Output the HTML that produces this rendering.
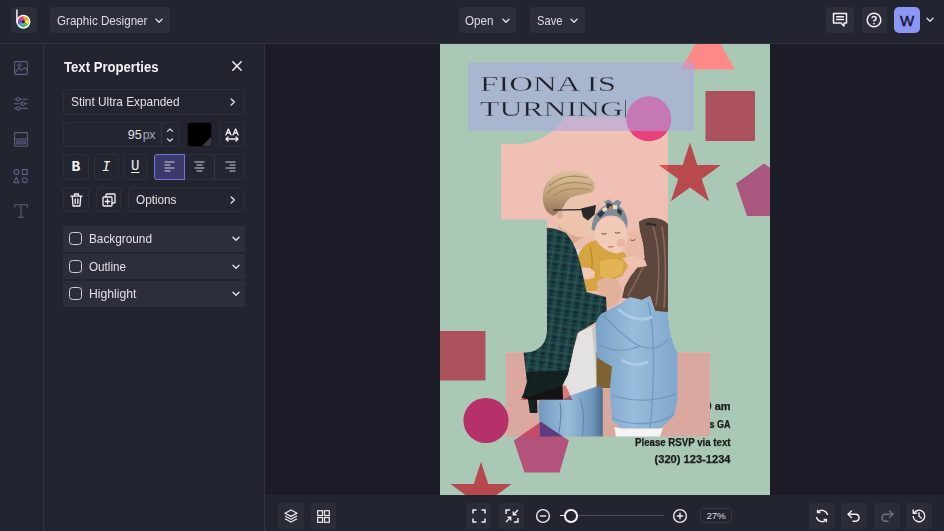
<!DOCTYPE html>
<html><head><meta charset="utf-8"><title>Graphic Designer</title>
<style>
*{box-sizing:border-box;margin:0;padding:0}
html,body{width:944px;height:531px;overflow:hidden;background:#1b1c27;font-family:"Liberation Sans",sans-serif;color:#e4e5ea}
.abs{position:absolute}
#top{position:absolute;left:0;top:0;width:944px;height:44px;background:#22242f;border-bottom:1px solid #30323f}
#left{position:absolute;left:0;top:44px;width:44px;height:487px;background:#22242f;border-right:1px solid #30323f}
#panel{position:absolute;left:44px;top:44px;width:221px;height:487px;background:#22242f;border-right:1px solid #30323f}
#stage{position:absolute;left:265px;top:44px;width:679px;height:451px;background:#1b1c27;overflow:hidden}
#bottom{position:absolute;left:265px;top:495px;width:679px;height:36px;background:#22242f}
.tb{position:absolute;top:7px;height:26px;background:#2c2e3b;border-radius:3px;font-size:13px;line-height:27px;color:#dcdde4;white-space:nowrap}
.btn{position:absolute;border:1px solid #2d2f3b;border-radius:3px;background:#232530}
.row{position:absolute;left:19px;width:182px;height:26px;background:#2c2e3b;font-size:13px;line-height:26px;color:#e0e1e7}
.row .cb{position:absolute;left:6px;top:6px;width:13px;height:13px;border:1.5px solid #cfd0d8;border-radius:3.5px}
.row span{position:absolute;left:26px;top:0}
.row svg{position:absolute;left:169px;top:10px}
.bb{position:absolute;top:8px;width:26px;height:26px;background:#2a2c38;border-radius:3px}
svg{display:block;overflow:visible}
.sx{display:inline-block;transform:scaleX(.9);transform-origin:0 50%;white-space:nowrap}
</style></head><body>

<div id="top">
  <div class="tb" style="left:11px;width:26px">
    <svg width="26" height="26" viewBox="0 0 26 26">
      <circle cx="12.4" cy="14.7" r="5.6" fill="#e8483f"/>
      <path d="M12.4 14.7 L12.4 9.1 A5.6 5.6 0 0 1 17.25 11.9Z" fill="#f6a21c"/>
      <path d="M12.4 14.7 L17.25 11.9 A5.6 5.6 0 0 1 17.25 17.5Z" fill="#f0e040"/>
      <path d="M12.4 14.7 L17.25 17.5 A5.6 5.6 0 0 1 12.4 20.3Z" fill="#56c245"/>
      <path d="M12.4 14.7 L12.4 20.3 A5.6 5.6 0 0 1 7.55 17.5Z" fill="#2fb8d8"/>
      <path d="M12.4 14.7 L7.55 17.5 A5.6 5.6 0 0 1 7.55 11.9Z" fill="#7a4fd0"/>
      <path d="M12.4 14.7 L7.55 11.9 A5.6 5.6 0 0 1 12.4 9.1Z" fill="#e83a8c"/>
      <circle cx="12.4" cy="14.7" r="1.6" fill="#3a2a30"/>
      <circle cx="12.4" cy="14.7" r="6.3" fill="none" stroke="#fff" stroke-width="1.5"/>
      <path d="M5.9 15 V3" stroke="#fff" stroke-width="1.4" stroke-linecap="round" fill="none"/>
    </svg>
  </div>
  <div class="tb" style="left:50px;width:120px"><span class="abs sx" style="left:6.5px;transform:scaleX(.894)">Graphic Designer</span>
    <svg class="abs" style="left:104.7px;top:11px" width="8" height="6" viewBox="0 0 8 6"><path d="M1 1.2 L4 4.2 L7 1.2" fill="none" stroke="#dcdde4" stroke-width="1.4" stroke-linecap="round" stroke-linejoin="round"/></svg>
  </div>
  <div class="tb" style="left:459px;width:57px"><span class="abs sx" style="left:6.4px;transform:scaleX(.896)">Open</span>
    <svg class="abs" style="left:42.5px;top:11px" width="8" height="6" viewBox="0 0 8 6"><path d="M1 1.2 L4 4.2 L7 1.2" fill="none" stroke="#dcdde4" stroke-width="1.4" stroke-linecap="round" stroke-linejoin="round"/></svg>
  </div>
  <div class="tb" style="left:530px;width:55px"><span class="abs sx" style="left:6.6px;transform:scaleX(.858)">Save</span>
    <svg class="abs" style="left:40px;top:11px" width="8" height="6" viewBox="0 0 8 6"><path d="M1 1.2 L4 4.2 L7 1.2" fill="none" stroke="#dcdde4" stroke-width="1.4" stroke-linecap="round" stroke-linejoin="round"/></svg>
  </div>
  <div class="tb" style="left:826px;width:28px">
    <svg class="abs" style="left:6px;top:5px" width="16" height="16" viewBox="0 0 16 16"><path d="M1.5 1.5 H14.5 V11 H12 V14 L9 11 H1.5 Z" fill="none" stroke="#f0f0f4" stroke-width="1.5" stroke-linejoin="round"/><path d="M4 4.8 H12 M4 7.6 H12" stroke="#f0f0f4" stroke-width="1.5"/></svg>
  </div>
  <div class="tb" style="left:862px;width:25px">
    <svg class="abs" style="left:4px;top:5px" width="16" height="16" viewBox="0 0 16 16"><circle cx="8" cy="8" r="6.8" fill="none" stroke="#f0f0f4" stroke-width="1.5"/><path d="M5.9 6.3 A2.1 2.1 0 1 1 8 8.6 V9.6" fill="none" stroke="#f0f0f4" stroke-width="1.5"/><circle cx="8" cy="11.6" r="0.9" fill="#f0f0f4"/></svg>
  </div>
  <div class="tb" style="left:894px;width:26px;background:#8c97f5;border-radius:5px;color:#15163a;font-size:15px;text-align:center;-webkit-text-stroke:.45px #15163a">W</div>
  <svg class="abs" style="left:926px;top:17px" width="8" height="6" viewBox="0 0 8 6"><path d="M1 1.2 L4 4.2 L7 1.2" fill="none" stroke="#dcdde4" stroke-width="1.4" stroke-linecap="round" stroke-linejoin="round"/></svg>
</div>

<div id="left">
  <svg class="abs" style="left:14px;top:17px" width="14" height="14" viewBox="0 0 14 14"><g fill="none" stroke="#5c5e82" stroke-width="1.1" stroke-linejoin="round"><rect x="0.6" y="0.6" width="12.8" height="12.8" rx="0.8"/><circle cx="5.4" cy="4.3" r="1.5"/><path d="M0.8 11.8 L5 7.2 L7.6 9.2 L10.4 6.6 L13.2 9"/></g></svg>
  <svg class="abs" style="left:14px;top:53px" width="14" height="14" viewBox="0 0 14 14"><g fill="none" stroke="#5c5e82" stroke-width="1.1" stroke-linecap="round"><path d="M0.6 2.2 H13.4 M0.6 6.8 H13.4 M0.6 11.4 H13.4"/><circle cx="4.2" cy="2.2" r="1.7" fill="#22242f"/><circle cx="8.8" cy="6.8" r="1.7" fill="#22242f"/><circle cx="4.2" cy="11.4" r="1.7" fill="#22242f"/></g></svg>
  <svg class="abs" style="left:14px;top:88px" width="14" height="15" viewBox="0 0 14 15"><g fill="none" stroke="#5c5e82" stroke-width="1.1" stroke-linejoin="round"><rect x="0.6" y="0.6" width="12.8" height="13.6" rx="0.8"/><path d="M0.6 7 H13.4"/><rect x="2.6" y="9" width="8.8" height="3" fill="#3f415c" stroke-width="0.9"/></g></svg>
  <svg class="abs" style="left:13px;top:124.5px" width="15" height="14.5" viewBox="0 0 15 14.5"><g fill="none" stroke="#5c5e82" stroke-width="1.1" stroke-linejoin="round"><circle cx="3.4" cy="3" r="2.4"/><rect x="9.3" y="0.6" width="5" height="4.8"/><path d="M3.4 8.4 L6 13.6 H0.8Z"/><circle cx="11.8" cy="11.2" r="2.4"/></g></svg>
  <svg class="abs" style="left:14px;top:160px" width="14" height="14" viewBox="0 0 14 14"><g fill="none" stroke="#5c5e82" stroke-width="1.1" stroke-linecap="round" stroke-linejoin="round"><path d="M0.7 3.2 V0.7 H13.3 V3.2 M7 0.7 V13.3 M4.4 13.3 H9.6"/></g></svg>
</div>

<div id="panel">  <div class="abs" style="left:19.5px;top:14px;font-size:14px;font-weight:bold;color:#f3f3f6;line-height:18px;white-space:nowrap;transform:scaleX(.937);transform-origin:0 50%" id="tp">Text Properties</div>
  <svg class="abs" style="left:188px;top:17px" width="10" height="10" viewBox="0 0 10 10"><path d="M0.8 0.8 L9.2 9.2 M9.2 0.8 L0.8 9.2" stroke="#f0f0f4" stroke-width="1.5" stroke-linecap="round"/></svg>

  <div class="btn" style="left:19px;top:45px;width:182px;height:25.5px"><span class="abs" style="left:6.5px;top:0;line-height:24px;font-size:13px;color:#e0e1e7;white-space:nowrap;transform:scaleX(.91);transform-origin:0 50%" id="fontname">Stint Ultra Expanded</span>
    <svg class="abs" style="left:166px;top:8px" width="6" height="8" viewBox="0 0 6 8"><path d="M1.2 1 L4.4 4 L1.2 7" fill="none" stroke="#e0e1e7" stroke-width="1.4" stroke-linecap="round" stroke-linejoin="round"/></svg>
  </div>

  <div class="btn" style="left:19px;top:77.5px;width:116.5px;height:25.5px">
    <span class="abs" style="right:23.5px;top:0;line-height:24px;font-size:13px;color:#e0e1e7;white-space:nowrap"><span id="n95" style="font-size:12.6px">95</span><span style="color:#a3a5b3;margin-left:1px;font-size:12.4px;letter-spacing:-.4px">px</span></span>
    <div class="abs" style="left:96.5px;top:0;width:1px;height:23.5px;background:#33353f"></div>
    <svg class="abs" style="left:102px;top:4px" width="8" height="16" viewBox="0 0 8 16"><path d="M1.4 4.4 L4 2 L6.6 4.4 M1.4 11.8 L4 14.2 L6.6 11.8" fill="none" stroke="#d4d5dd" stroke-width="1.2" stroke-linecap="round" stroke-linejoin="round"/></svg>
  </div>
  <div class="abs" style="left:142.5px;top:77.5px;width:25.5px;height:25.5px;border-radius:3.5px;background:#000;border:1px solid #1a1b22;overflow:hidden"><div class="abs" style="right:0;bottom:0;width:0;height:0;border-left:9px solid transparent;border-bottom:9px solid #3a3b45"></div></div>
  <div class="btn" style="left:175px;top:77.5px;width:25.5px;height:25.5px">
    <svg class="abs" style="left:5px;top:5px" width="14" height="14" viewBox="0 0 14 14"><g fill="none" stroke="#eeeef2" stroke-width="1.3" stroke-linecap="round" stroke-linejoin="round"><path d="M0.8 7 L3.4 1 L6 7 M1.7 5 H5.1 M8 7 L10.6 1 L13.2 7 M8.9 5 H12.3"/><path d="M1 11 H13 M3 9 L1 11 L3 13 M11 9 L13 11 L11 13"/></g></svg>
  </div>

  <div class="btn" style="left:19px;top:110px;width:25.5px;height:25.5px"><span class="abs" style="left:0;width:23.5px;text-align:center;line-height:24px;font:bold 14.5px/24px 'Liberation Mono',monospace;color:#f4f4f6">B</span></div>
  <div class="btn" style="left:49.5px;top:110px;width:25.5px;height:25.5px"><span class="abs" style="left:0;width:23.5px;text-align:center;font:italic 14px/24px 'Liberation Mono',monospace;color:#f4f4f6">I</span></div>
  <div class="btn" style="left:78.5px;top:110px;width:25.5px;height:25.5px"><span class="abs" style="left:0;width:23.5px;text-align:center;font:14px/22.5px 'Liberation Mono',monospace;color:#f4f4f6;text-decoration:underline;text-underline-offset:2.2px;text-decoration-thickness:1.1px">U</span></div>
  <div class="btn" style="left:110px;top:110px;width:91px;height:25.5px"></div>
  <div class="abs" style="left:110px;top:110px;width:30.5px;height:25.5px;background:#3a3869;border:1px solid #7575d6;border-radius:3px 0 0 3px"></div>
  <div class="abs" style="left:170px;top:111px;width:1px;height:23.5px;background:#33353f"></div>
  <svg class="abs" style="left:120px;top:117px" width="11" height="11" viewBox="0 0 11 11"><path d="M0.5 1 H10.5 M0.5 4 H6.5 M0.5 7 H10.5 M0.5 10 H6.5" stroke="#d8d9e6" stroke-width="0.95"/></svg>
  <svg class="abs" style="left:150px;top:117px" width="11" height="11" viewBox="0 0 11 11"><path d="M0.5 1 H10.5 M2.5 4 H8.5 M0.5 7 H10.5 M2.5 10 H8.5" stroke="#d8d9e6" stroke-width="0.95"/></svg>
  <svg class="abs" style="left:181px;top:117px" width="11" height="11" viewBox="0 0 11 11"><path d="M0.5 1 H10.5 M4.5 4 H10.5 M0.5 7 H10.5 M4.5 10 H10.5" stroke="#d8d9e6" stroke-width="0.95"/></svg>

  <div class="btn" style="left:19px;top:142.5px;width:25.5px;height:25.5px">
    <svg class="abs" style="left:5.5px;top:5px" width="13" height="14" viewBox="0 0 13 14"><g fill="none" stroke="#eeeef2" stroke-width="1.3" stroke-linecap="round" stroke-linejoin="round"><path d="M1 3.2 H12 M4.5 3 V1 H8.5 V3 M2.3 3.4 L3 13 H10 L10.7 3.4 M5.2 6 V10.5 M7.8 6 V10.5"/></g></svg>
  </div>
  <div class="btn" style="left:51.5px;top:142.5px;width:25.5px;height:25.5px">
    <svg class="abs" style="left:5px;top:5px" width="14" height="14" viewBox="0 0 14 14"><g fill="none" stroke="#eeeef2" stroke-width="1.3" stroke-linecap="round" stroke-linejoin="round"><rect x="1" y="4" width="9" height="9" rx="1"/><path d="M4 4 V1.8 Q4 1 4.8 1 H12.2 Q13 1 13 1.8 V9.2 Q13 10 12.2 10 H10 M5.5 6.2 V10.8 M3.2 8.5 H7.8"/></g></svg>
  </div>
  <div class="btn" style="left:84px;top:142.5px;width:117px;height:25.5px"><span class="abs" style="left:6.5px;top:0;line-height:24px;font-size:13px;color:#e0e1e7;transform:scaleX(.904);transform-origin:0 50%" id="opt">Options</span>
    <svg class="abs" style="left:101px;top:8px" width="6" height="8" viewBox="0 0 6 8"><path d="M1.2 1 L4.4 4 L1.2 7" fill="none" stroke="#e0e1e7" stroke-width="1.4" stroke-linecap="round" stroke-linejoin="round"/></svg>
  </div>

  <div class="row" style="top:181.5px;height:26.5px"><div class="cb"></div><span id="r1" class="sx" style="transform:scaleX(.908)">Background</span><svg width="8" height="6" viewBox="0 0 8 6"><path d="M1 1.2 L4 4.2 L7 1.2" fill="none" stroke="#e0e1e7" stroke-width="1.4" stroke-linecap="round" stroke-linejoin="round"/></svg></div>
  <div class="row" style="top:209.5px;height:25.5px"><div class="cb"></div><span id="r2" class="sx" style="transform:scaleX(.898)">Outline</span><svg width="8" height="6" viewBox="0 0 8 6"><path d="M1 1.2 L4 4.2 L7 1.2" fill="none" stroke="#e0e1e7" stroke-width="1.4" stroke-linecap="round" stroke-linejoin="round"/></svg></div>
  <div class="row" style="top:237px;height:26px"><div class="cb"></div><span id="r3" class="sx" style="transform:scaleX(.938)">Highlight</span><svg width="8" height="6" viewBox="0 0 8 6"><path d="M1 1.2 L4 4.2 L7 1.2" fill="none" stroke="#e0e1e7" stroke-width="1.4" stroke-linecap="round" stroke-linejoin="round"/></svg></div>
</div>

<div id="stage"><svg class="abs" style="left:175px;top:0" width="330" height="451" viewBox="440 44 330 451">
  <defs>
    <clipPath id="cv"><rect x="440" y="44" width="330" height="451"/></clipPath>
    <clipPath id="one"><path d="M565 117 H668 V312 Q670 340 677.5 352.5 H710 V436.4 H505.8 V352.5 H526 A20.5 20.5 0 0 0 546.8 332 V219.5 H501 V144 H522 Q550 140 565 117Z"/></clipPath>
    <linearGradient id="wall" x1="0" y1="117" x2="0" y2="352" gradientUnits="userSpaceOnUse"><stop offset="0" stop-color="#f0c2b5"/><stop offset="1" stop-color="#ebbaad"/></linearGradient>
    <linearGradient id="hairm" x1="0" y1="170" x2="0" y2="212" gradientUnits="userSpaceOnUse"><stop offset="0" stop-color="#dcc49c"/><stop offset="0.5" stop-color="#c4a57d"/><stop offset="1" stop-color="#997c62"/></linearGradient>
    <pattern id="plaid" width="9" height="9" patternUnits="userSpaceOnUse" patternTransform="rotate(8)"><rect width="9" height="9" fill="#1d3d42"/><rect x="0" y="0" width="3.4" height="9" fill="#152b36"/><rect x="0" y="0" width="9" height="3" fill="#27564f" opacity=".6"/><rect x="6" y="0" width="0.7" height="9" fill="#34705f" opacity=".55"/><rect x="0" y="6.5" width="9" height="0.7" fill="#34705f" opacity=".55"/></pattern>
    <linearGradient id="jk" x1="597" y1="0" x2="677" y2="0" gradientUnits="userSpaceOnUse"><stop offset="0" stop-color="#7aa2c6"/><stop offset="0.45" stop-color="#98bcdb"/><stop offset="1" stop-color="#80a7cc"/></linearGradient>
    <linearGradient id="jn" x1="539" y1="0" x2="603" y2="0" gradientUnits="userSpaceOnUse"><stop offset="0" stop-color="#7099be"/><stop offset="0.45" stop-color="#98bddb"/><stop offset="0.85" stop-color="#6c94b8"/><stop offset="1" stop-color="#466c8c"/></linearGradient>
  </defs>
  <g clip-path="url(#cv)">
    <rect x="440" y="44" width="330" height="451" fill="#a9c9b6"/>
    <g font-family="'Liberation Sans',sans-serif" font-weight="bold" font-size="10.3" fill="#1b1b1b" stroke="#1b1b1b" stroke-width=".25">
      <text x="705.5" y="410.3" textLength="25" lengthAdjust="spacingAndGlyphs">0 am</text>
      <text x="709.6" y="428" textLength="21" lengthAdjust="spacingAndGlyphs">s GA</text>
      <text x="635" y="445.5" textLength="95.5" lengthAdjust="spacingAndGlyphs">Please RSVP via text</text>
      <text x="654.5" y="462.6" textLength="76" lengthAdjust="spacingAndGlyphs">(320) 123-1234</text>
    </g>
    <!-- numeral one with photo -->
    <g clip-path="url(#one)">
      <rect x="500" y="110" width="215" height="243" fill="url(#wall)"/>
      <rect x="500" y="352.5" width="215" height="85" fill="#dba8a0"/>
      <!-- woman hair -->
      <path d="M638.8 222 C644 218 652 217 658 218.5 C663 219.5 666.5 222 668 224 V313 L655 311 L650 296 L642 300 L622 298 L624.7 286.5 L630.4 276.6 L637 268 L644.5 258 L643 244 L640 232Z" fill="#5d463b"/>
      <path d="M652 224 C660 245 660 275 656 305 M645 262 C640 275 634 285 628 296 M662 226 C666 250 666 280 664 308" fill="none" stroke="#86695a" stroke-width="1.6"/>
      <path d="M646 222.5 l10 1.5 l0 2.2 l-10 -1.5z" fill="#2e2623"/>
      <!-- woman face -->
      <path d="M623.3 238 C626 232 634 229 640 232 L643 244 L644.5 258 L637 262 L629 258 L625 252 L626.5 247 L623 243Z" fill="#e9bba7"/>
      <path d="M630.5 240 q2.5 1.2 4.8 -.4" fill="none" stroke="#6b4a3c" stroke-width=".9"/>
      <!-- man hair -->
      <path d="M542.8 198 C543 190 545 184 549 180 C554 175 560 172 566 171.3 C572 170.5 578 171 582 172.5 C588 174.5 593 179 594.4 184 C594.8 188 593.5 191 592 192 C589 193.5 585 194 582.4 194.6 C577 195.5 573 196.5 571 197.5 C567 200 565 203 564 206 L560 212 L553 216 L548.5 213 C545 210 543 204 542.8 198Z" fill="url(#hairm)"/>
      <path d="M549 186 C558 177 572 174 588 178 M547 193 C558 183 574 180 592 185 M553 196 C562 189 574 187 590 190" fill="none" stroke="#a98a63" stroke-width="1.2"/>
      <!-- man face -->
      <path d="M571 197.5 C576 196 584 194.5 592 192 C593 198 593.5 204 594 208 L596.5 218.5 L593.5 221 L594 227 L592 233 L588 237.5 L580 239 L574 244 L566 241 L560 232 L557 222 L553 216 L560 212 L564 206Z" fill="#ecc4ae"/>
      <path d="M558 224 Q568 238 588 237.5 L580 239 L574 244 L566 241 L560 232Z" fill="#dba994"/>
      <ellipse cx="559.8" cy="214.5" rx="2.6" ry="4.2" fill="#e0aa92"/>
      <path d="M553.4 210.2 L582.5 209.6" stroke="#2a2726" stroke-width="1.3"/>
      <path d="M581 208.6 L596 205 L594.6 214.5 L588 220.5 L583 217Z" fill="#2b2828"/>
      <!-- baby head -->
      <ellipse cx="610.5" cy="236" rx="17" ry="19" fill="#f1cab8"/>
      <circle cx="621" cy="243" r="4" fill="#ecb4a2"/>
      <path d="M601.5 233.5 q2.5 1.5 5 0 M615 232.5 q2.5 1.5 5 0" fill="none" stroke="#6b4a3c" stroke-width="1"/>
      <path d="M608 246.5 q3 1.2 5.5 -.3" fill="none" stroke="#c46a62" stroke-width="1.1"/>
      <path d="M591.5 229 C592 222 594 216 597 212.5 C600 209 603 206.5 606 205 L604 201.5 L609 199.5 L613 203 L617 199.5 L621.5 202 L619.5 206.5 C623.5 209 626.5 214 627.5 221.5 L627 229 C625 222 621 217.5 616 216 C610 214.5 603 216 599 221 C596.5 224 595 227 594.5 231Z" fill="#7f8b97"/>
      <path d="M597 214 l5 -4 l3 3 l-5 5z M607 203 l5 1 l-1 5 l-5 -1z M618 208 l4 3 l-1 5 l-4 -4z" fill="#34383a"/>
      <path d="M602 209 l4 -2.5 l1.5 3.5 l-4 2z M613 205 h4 v4 h-4z" fill="#e8dcc6"/>
      <path d="M609.5 206 l3 1 l-1 3 l-3 -1z" fill="#c9853f"/>
      <!-- white tee sliver -->
      <path d="M574 250 L580 249 L583 262 L586 280 L588 294 L582 295 L579 270Z" fill="#d9d8d4"/>
      <!-- baby body -->
      <path d="M576.7 262 C578 252 584 245 590 242 L596 240 C600 247 608 252 616 253.5 L624 252 L627.5 258 L628 266 L622 276 L612 280 L600 283 L596.5 291 L584 291 L583.8 279 L580 274Z" fill="#d6a440"/>
      <path d="M600 262 C608 258 618 258 624 262 L622 274 L608 280 L600 275Z" fill="#e2b456"/>
      <path d="M590 246 C592 256 594 266 590 276" fill="none" stroke="#b78a30" stroke-width="1.3"/>
      <path d="M576.7 267 L590 268 L595 272 L594 278 L586 279.5 L580 276Z" fill="#f0c9b6"/>
      <path d="M622 258 L634 256 L645 260 L647 266 L638 267.5 L628 265Z" fill="#eec3b0"/>
      <!-- woman hand -->
      <path d="M596.5 282 C602 277 612 277 618 281 L622 290 L620 300 L614 306 L606 308 L600 300Z" fill="#e3b09a"/>
      <!-- shirt -->
      <path d="M546 227.5 L556 229 L566 233 L572.5 242 L576 250 L580 262 L584 280 L586.6 292 L606 297 L607 314.6 L596 322 L577.5 333.3 L573.8 348.2 L568.2 374.3 L562.6 385.5 L563 399.4 L537 399.5 L537 413 L530 413 L528 399 L521.5 398 L523.5 394 L527 382 L523.5 352.5 L530 350 L546.8 332Z" fill="url(#plaid)"/>
      <path d="M526 372 L568.5 370 L562.6 385.5 L563 399.4 L548 401 L537 399.5 L537.5 413 L530 413 L528 399 L521.5 398 L523.5 394 L527 382Z" fill="#121d1d" opacity=".88"/>
      <!-- white tee -->
      <path d="M579.4 331.4 L596.2 325.8 L598 352 L600.8 381.8 L596.2 387.3 L572 395 L563 399 L562.6 385.5 L568.2 374.3 L573.8 348.2Z" fill="#e3e2e0"/>
      <path d="M592 328 L596.2 325.8 L598 352 L600.8 381.8 L597 386Z" fill="#c6c6c8"/>
      <!-- bag + leg shadow -->
      <rect x="596.5" y="352" width="15.5" height="36" fill="#7d6332"/>
      <!-- jeans man -->
      <path d="M538.5 404 L539.7 399.5 L563 399.4 L572 395 L600.4 385.3 L602.8 390 L602.8 437 H540Z" fill="url(#jn)"/>
      <path d="M560 402 C562 415 560 428 558 437 M580 398 C584 410 584 425 582 437" fill="none" stroke="#5f88ad" stroke-width="1.2"/>
      <!-- denim jacket -->
      <path d="M595.5 323 C599 315 602 313 603.6 312.8 L620.4 303.5 L630 297 L642 300 L650 296 L655 311 L668 312 Q670 340 677.5 352.5 V400 L674 415.7 L661 428.5 L621.4 428.5 L612 420.4 L609.8 390 L611 376 L612 366.8 L597 357.5Z" fill="url(#jk)"/>
      <path d="M603 316 C615 325 625 340 640 346 M600 345 C612 352 625 352 640 346 M640 346 C650 350 660 348 668 340 M648 302 C655 330 655 380 650 428 M613 395 C630 402 655 402 676 394 M612 418 C630 426 660 426 674 414" fill="none" stroke="#6a92b8" stroke-width="1.3" opacity=".8"/>
      <path d="M618 309 C628 318 640 322 652 317 M622 360 C632 366 640 366 648 362" fill="none" stroke="#b4d0e8" stroke-width="3" opacity=".8"/>
      <!-- white pants -->
      <path d="M614.4 427 L621.4 428.5 L661 428.5 L663 427 L660 437 L616 437Z" fill="#f4f4f4"/>
    </g>
    <!-- shapes -->
    <path d="M708 22 L735 69.5 H681Z" fill="#ff8987"/>
    <rect x="705.5" y="91" width="49.5" height="50" fill="#ab525e"/>
    <circle cx="648.8" cy="118.8" r="22.5" fill="#e8407a"/>
    <path id="star1" d="M690 142.5 L697.3 165 L720.9 165 L701.8 178.9 L709.1 201.3 L690 187.4 L670.9 201.3 L678.2 178.9 L659.1 165 L682.7 165Z" fill="#b8494d"/>
    <path d="M659.1 165 H668 V171.5Z" fill="#e2504f"/>
    <path d="M764 163.5 L792 183.5 L781 216 H747 L736 183.5Z" fill="#a9577e"/>
    <rect x="440" y="331" width="45.5" height="49.5" fill="#ad525d"/>
    <circle cx="486" cy="420.5" r="22.6" fill="#b6306a"/>
    <g style="mix-blend-mode:multiply">
      <path d="M565.5 385 L572.5 400 H519Z" fill="#f58a8a"/>
    </g>
    <path d="M541 422 L568.8 440.5 L559.5 472.5 H524.5 L513.8 440.5Z" fill="#b3527b"/>
    <path d="M541 422 L562 436.5 H520Z" fill="#c74a6b"/>
    <path d="M541 422 L562.6 436.4 H539.8 V422.8Z" fill="#5b3c80"/>
    <path d="M481 461.7 L488.2 484 L511.6 484 L492.7 497.8 L499.9 520 L481 506.3 L462.1 520 L469.3 497.8 L450.4 484 L473.8 484Z" fill="#b5494d"/>
    <!-- selection -->
    <rect x="468" y="62.5" width="226" height="68.5" fill="#a9a6e6" opacity=".55"/>
    <rect x="625" y="100" width="1" height="17.5" fill="#55596a"/>
    <g font-family="'Liberation Serif',serif" font-size="20.5" fill="#1f1f24" stroke="#a9b4d1" stroke-width=".35">
      <text x="480" y="91" textLength="136" lengthAdjust="spacingAndGlyphs">FIONA IS</text>
      <text x="480" y="116" textLength="143" lengthAdjust="spacingAndGlyphs">TURNING</text>
    </g>

  </g>
</svg>
</div>

<div id="bottom">  <div class="bb" style="left:13px"><svg class="abs" style="left:6px;top:6px" width="14" height="14" viewBox="0 0 14 14"><g fill="none" stroke="#eeeef2" stroke-width="1.2" stroke-linejoin="round"><path d="M7 1 L13 4.2 L7 7.4 L1 4.2Z"/><path d="M1 7 L7 10.2 L13 7 M1 9.8 L7 13 L13 9.8"/></g></svg></div>
  <div class="bb" style="left:46px;width:25px"><svg class="abs" style="left:6px;top:6.5px" width="13" height="13" viewBox="0 0 13 13"><g fill="none" stroke="#eeeef2" stroke-width="1.2"><rect x="0.7" y="0.7" width="4.8" height="4.8"/><rect x="7.5" y="0.7" width="4.8" height="4.8"/><rect x="0.7" y="7.5" width="4.8" height="4.8"/><rect x="7.5" y="7.5" width="4.8" height="4.8"/></g></svg></div>
  <div class="bb" style="left:200.5px;width:25.5px"><svg class="abs" style="left:6px;top:6px" width="14" height="14" viewBox="0 0 14 14"><path d="M1 4.5 V1 H4.5 M9.5 1 H13 V4.5 M13 9.5 V13 H9.5 M4.5 13 H1 V9.5" fill="none" stroke="#eeeef2" stroke-width="1.5"/></svg></div>
  <div class="bb" style="left:233.5px;width:25.5px"><svg class="abs" style="left:6px;top:6px" width="14" height="14" viewBox="0 0 14 14"><g fill="none" stroke="#eeeef2" stroke-width="1.4"><path d="M1 5 V1 H5 M13 9 V13 H9"/><path d="M13 1 L8.3 5.7 M8.3 2.5 V5.7 H11.5 M1 13 L5.7 8.3 M2.5 8.3 H5.7 V11.5"/></g></svg></div>
  <svg class="abs" style="left:270px;top:13px" width="16" height="16" viewBox="0 0 16 16"><circle cx="8" cy="8" r="6.4" fill="none" stroke="#eeeef2" stroke-width="1.4"/><path d="M4.8 8 H11.2" stroke="#eeeef2" stroke-width="1.4"/></svg>
  <div class="abs" style="left:295px;top:20px;width:104px;height:1.2px;background:#4a4c5e"></div>
  <div class="abs" style="left:295px;top:19.7px;width:5px;height:1.8px;background:#eeeef2"></div>
  <div class="abs" style="left:299px;top:14px;width:13.5px;height:13.5px;border-radius:50%;border:2px solid #f2f2f5;background:#22242f"></div>
  <svg class="abs" style="left:407px;top:13px" width="16" height="16" viewBox="0 0 16 16"><circle cx="8" cy="8" r="6.4" fill="none" stroke="#eeeef2" stroke-width="1.4"/><path d="M4.8 8 H11.2 M8 4.8 V11.2" stroke="#eeeef2" stroke-width="1.4"/></svg>
  <div class="abs" style="left:435px;top:13px;width:32px;height:15px;border:1px solid #343645;border-radius:3px;font-size:9.8px;line-height:13.5px;text-align:center;color:#dedfe6;letter-spacing:-.2px">27%</div>
  <div class="bb" style="left:544px"><svg class="abs" style="left:6px;top:6px" width="14" height="14" viewBox="0 0 14 14"><g fill="none" stroke="#eeeef2" stroke-width="1.4" stroke-linejoin="round"><path d="M12.5 6 A5.6 5.6 0 0 0 2.8 3.2 M1.5 8 A5.6 5.6 0 0 0 11.2 10.8"/><path d="M2.6 0.8 V3.6 H5.4 M11.4 13.2 V10.4 H8.6"/></g></svg></div>
  <div class="bb" style="left:576px"><svg class="abs" style="left:6px;top:7px" width="14" height="12" viewBox="0 0 14 12"><path d="M4.5 1 L1 4.3 L4.5 7.6 M1 4.3 H9.3 A3.6 3.6 0 0 1 9.3 11.3 H6" fill="none" stroke="#eeeef2" stroke-width="1.4" stroke-linejoin="round" stroke-linecap="round"/></svg></div>
  <div class="bb" style="left:609px"><svg class="abs" style="left:6px;top:7px" width="14" height="12" viewBox="0 0 14 12"><path d="M9.5 1 L13 4.3 L9.5 7.6 M13 4.3 H4.7 A3.6 3.6 0 0 0 4.7 11.3 H8" fill="none" stroke="#6d6f80" stroke-width="1.4" stroke-linejoin="round" stroke-linecap="round"/></svg></div>
  <div class="bb" style="left:641px"><svg class="abs" style="left:6px;top:6px" width="14" height="14" viewBox="0 0 14 14"><g fill="none" stroke="#eeeef2" stroke-width="1.4" stroke-linejoin="round" stroke-linecap="round"><path d="M2 4 A5.8 5.8 0 1 1 1.2 7.5"/><path d="M1.2 1 V4.3 H4.5 M7 3.8 V7.2 L9.3 9"/></g></svg></div>
</div>

</body></html>
